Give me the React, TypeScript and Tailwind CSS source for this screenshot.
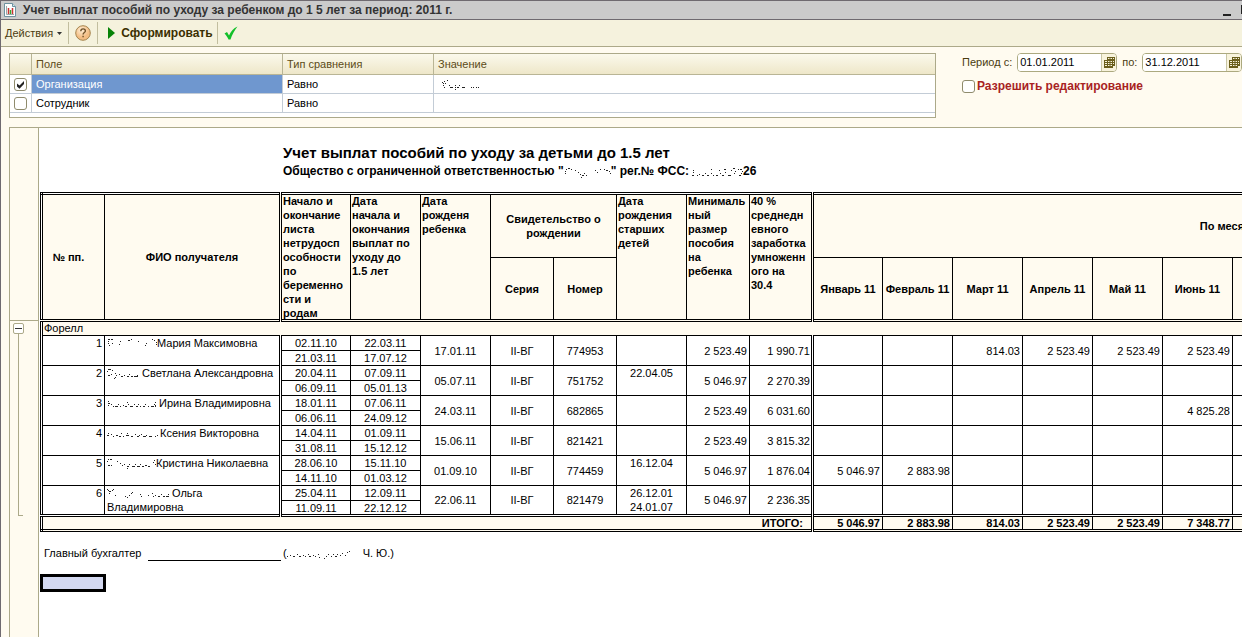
import { useState } from "react";
import clsx from "clsx";

const filters = [
  { field: "Организация", comparison: "Равно", checked: true },
  { field: "Сотрудник", comparison: "Равно", checked: false },
];

const months = [
  "Январь 11", "Февраль 11", "Март 11", "Апрель 11", "Май 11", "Июнь 11",
  "Июль 11", "Август 11", "Сентябрь 11", "Октябрь 11", "Ноябрь 11", "Декабрь 11",
];

const columnWidths = [
  "w-[63px]", "w-[176px]", "w-[70px]", "w-[70px]", "w-[70px]", "w-[63px]",
  "w-[63px]", "w-[70px]", "w-[63px]", "w-[63px]",
];

// Only fragments are left of the erased surnames
const rows = [
  {
    name: "Мария Максимовна",
    erased: { width: 50, d: "M1 1h2M4 1h2M1 3h1M1 5h1M2 7h1M5 5h1M13 3h1M12 6h1M21 2h2M24 1h1M31 3h1M39 5h1M38 7h1M45 1h1M47 2h1M49 4h1M49 6h1M50 8h1" },
    sick: ["02.11.10", "21.03.11"],
    care: ["22.03.11", "17.07.12"],
    birth: "17.01.11",
    number: "774953",
    older: "",
    min: "2 523.49",
    avg: "1 990.71",
    pay: { 2: "814.03", 3: "2 523.49", 4: "2 523.49", 5: "2 523.49" },
  },
  {
    name: "Светлана Александровна",
    erased: { width: 35, d: "M1 1h3M5 2h1M0 3h1M1 7h2M4 6h1M8 5h1M9 7h1M8 9h1M7 10h1M12 6h1M14 8h2M17 7h1M20 8h2M22 6h1M24 8h2M27 8h4M30 7h1" },
    sick: ["20.04.11", "06.09.11"],
    care: ["07.09.11", "05.01.13"],
    birth: "05.07.11",
    number: "751752",
    older: "22.04.05",
    min: "5 046.97",
    avg: "2 270.39",
    pay: {},
  },
  {
    name: "Ирина Владимировна",
    erased: { width: 52, d: "M1 3h1M1 5h2M1 7h1M4 6h1M6 8h1M8 8h3M11 6h1M13 8h1M16 7h1M18 8h2M21 6h1M20 4h1M23 8h3M27 6h1M29 8h2M31 6h1M33 8h1M36 8h2M38 6h1M41 8h1M44 8h3M47 6h1M48 4h1M48 7h1M48 8h1" },
    sick: ["18.01.11", "06.06.11"],
    care: ["07.06.11", "24.09.12"],
    birth: "24.03.11",
    number: "682865",
    older: "",
    min: "2 523.49",
    avg: "6 031.60",
    pay: { 5: "4 825.28" },
  },
  {
    name: "Ксения Викторовна",
    erased: { width: 53, d: "M1 5h1M0 7h2M4 6h1M6 8h1M9 7h2M12 8h2M14 5h1M16 8h1M19 7h3M20 5h1M24 8h2M28 6h1M30 8h2M32 7h1M34 6h1M36 8h3M39 7h1M42 8h3M48 8h1M50 7h1" },
    sick: ["14.04.11", "31.08.11"],
    care: ["01.09.11", "15.12.12"],
    birth: "15.06.11",
    number: "821421",
    older: "",
    min: "2 523.49",
    avg: "3 815.32",
    pay: {},
  },
  {
    name: "Кристина Николаевна",
    erased: { width: 49, d: "M1 1h1M3 1h2M0 3h1M1 7h2M4 7h1M10 3h1M13 5h1M15 7h1M17 6h1M20 8h2M20 10h1M22 6h1M25 8h3M28 6h1M30 8h3M33 6h1M35 8h2M38 7h2M41 8h2M47 2h1M46 4h1M48 6h1" },
    sick: ["28.06.10", "14.11.10"],
    care: ["15.11.10", "01.03.12"],
    birth: "01.09.10",
    number: "774459",
    older: "16.12.04",
    min: "5 046.97",
    avg: "1 876.04",
    pay: { 0: "5 046.97", 1: "2 883.98" },
  },
  {
    name: "Ольга\nВладимировна",
    erased: { width: 65, d: "M0 1h1M1 2h1M2 3h2M5 2h1M6 1h1M2 5h1M8 7h1M18 8h1M20 9h1M22 7h1M24 5h1M25 4h1M33 6h1M34 8h1M41 7h1M45 5h1M46 8h1M48 7h1M51 8h2M54 6h1M56 8h2M59 8h3M61 6h1" },
    sick: ["25.04.11", "11.09.11"],
    care: ["12.09.11", "22.12.12"],
    birth: "22.06.11",
    number: "821479",
    older: "26.12.01\n24.01.07",
    min: "5 046.97",
    avg: "2 236.35",
    pay: {},
  },
];

const totals = ["5 046.97", "2 883.98", "814.03", "2 523.49", "2 523.49", "7 348.77"];

function Erased({ width, d }: { width: number; d: string }) {
  return (
    <svg
      width={width}
      height="11"
      viewBox={`0 -0.5 ${width} 11`}
      className="inline-block align-text-bottom"
      stroke="#222"
      strokeWidth="1"
      shapeRendering="crispEdges"
      aria-hidden="true"
    >
      <path d={d} />
    </svg>
  );
}

function Checkbox({ id, label, initial = false }: { id: string; label?: string; initial?: boolean }) {
  const [checked, setChecked] = useState(initial);
  return (
    <span className="relative block h-[13px] w-[13px] shrink-0">
      <input
        id={id}
        type="checkbox"
        aria-label={label}
        checked={checked}
        onChange={() => setChecked(!checked)}
        className="block h-[13px] w-[13px] appearance-none rounded-[3px] border border-[#8f8b6c] bg-white"
      />
      {checked && (
        <svg viewBox="0 0 13 13" className="pointer-events-none absolute inset-0" aria-hidden="true">
          <path d="M3 5.5v3l2.500 2.200L10 6V3L5.500 7.500z" fill="#222" />
        </svg>
      )}
    </span>
  );
}

function DateField({ id, label, value }: { id: string; label: string; value: string }) {
  return (
    <>
      <label htmlFor={id} className="shrink-0">{label}</label>
      <span className="flex h-[19px] w-[100px] shrink-0 overflow-hidden rounded-[4px] border border-[#aca97f] bg-white">
        <input id={id} defaultValue={value} className="w-[83px] min-w-0 bg-white pl-0.5 text-[11px] text-black outline-none" />
        <button className="flex flex-1 items-center justify-center border-l border-[#c9c6a4] bg-[#f8f3dc]" aria-label="Выбрать дату">
          <svg width="11" height="12" viewBox="0 0 11 12" className="shrink-0" aria-hidden="true">
            <path d="M3 0h8v9h-2v2H0V3h3z" fill="#6b5f1c" />
            <path d="M4 1.500h1.500M6.500 1.500h1.500M9 1.500h1M1 4.500h2M4 4.500h1.500M6.500 4.500h1.500M9 4.500h1M1 6.500h2M4 6.500h1.500M6.500 6.500h1.500M9 6.500h1M1 8.500h2M4 8.500h1.500M6.500 8.500h1.500" stroke="#f8f3dc" />
          </svg>
        </button>
      </span>
    </>
  );
}

function Separator() {
  return <span className="h-[22px] w-px bg-[#c2be9f]" />;
}

function TitleBar() {
  return (
    <header className="flex h-5 items-center overflow-hidden border-y border-[#6f6a70] bg-[#cbcbcb] pl-[3px]">
      <svg width="12" height="14" viewBox="0 0 12 14" aria-hidden="true">
        <path d="M.5.5h8l3 3v10H.5z" fill="#fff" stroke="#6f93a0" />
        <path d="M8.500.5v3h3" fill="#d5e3e8" stroke="#6f93a0" />
        <path d="M2.500 3v8.500H10" fill="none" stroke="#9aa" />
        <path d="M4.500 5v6" stroke="#c33" strokeWidth="1.500" />
        <path d="M6.500 7v4" stroke="#3a3" strokeWidth="1.500" />
        <path d="M8.500 5v6" stroke="#c33" strokeWidth="1.500" />
      </svg>
      <h1 className="ml-[7px] whitespace-nowrap text-[12px] font-bold text-[#333]">
        Учет выплат пособий по уходу за ребенком до 1 5 лет за период: 2011 г.
      </h1>
      <div className="-mr-2 ml-auto flex gap-2.5">
        <button className="flex h-[11px] w-2 items-end" aria-label="Свернуть">
          <span className="h-0.5 w-2 bg-[#222]" />
        </button>
        <button className="h-[9px] w-[9px] border border-t-2 border-[#222]" aria-label="Развернуть" />
      </div>
    </header>
  );
}

function Toolbar() {
  return (
    <div className="flex h-[27px] items-center border-b border-[#aca989] bg-[#f5f2dd] pl-1 text-[#4a3c10]">
      <button className="flex items-center gap-1">
        Действия
        <svg width="5" height="3" viewBox="0 0 5 3" aria-hidden="true"><path d="M0 0h5L2.500 3z" fill="#333" /></svg>
      </button>
      <span className="ml-1.5 flex items-center gap-1.5">
        <Separator />
        <button aria-label="Справка">
          <svg width="16" height="16" viewBox="0 0 16 16" className="block" aria-hidden="true">
            <defs>
              <radialGradient id="help" cx="40%" cy="30%">
                <stop offset="0" stopColor="#fff0d8" />
                <stop offset="1" stopColor="#f3bd83" />
              </radialGradient>
            </defs>
            <circle cx="8" cy="8" r="7.300" fill="url(#help)" stroke="#a5844f" />
            <path d="M5.800 6.200c0-3.100 4.600-3.100 4.600-.3 0 1.600-2.300 1.700-2.300 3.600M8.100 10.800v1.500" fill="none" stroke="#70522a" strokeWidth="1.400" />
          </svg>
        </button>
        <Separator />
      </span>
      <button className="ml-2.5 flex items-center gap-1.5 text-[12px] font-bold text-[#3b2f00]">
        <svg width="7" height="12" viewBox="0 0 7 12" aria-hidden="true"><path d="M0 0l7 6-7 6z" fill="#078307" /></svg>
        Сформировать
      </button>
      <span className="ml-1 flex items-center gap-1.5">
        <Separator />
        <button aria-label="Применить">
          <svg width="14" height="14" viewBox="0 0 14 14" className="block" aria-hidden="true">
            <path d="M.5 7.500L3 6l2 3.500C7 5.500 9.500 2 13.500.5 10.500 4 8 9 6.500 13.500h-2C3.500 11 2 9 .5 7.500z" fill="#12c02a" />
          </svg>
        </button>
      </span>
    </div>
  );
}

function FilterTable() {
  const head = "h-[21px] border-b border-[#b9b595] bg-linear-to-b from-[#fbf9ec] to-[#eee7c9] pl-1 text-left font-normal";
  return (
    <div className="min-w-0 flex-1 border border-[#aca989] bg-white pb-1">
      <table className="w-full table-fixed border-separate border-spacing-0 leading-[14px]">
        <thead className="text-[#5c4b18]">
          <tr>
            <th className={clsx(head, "w-[22px] border-r")} aria-label="Использование" />
            <th className={clsx(head, "w-[251px] border-r")}>Поле</th>
            <th className={clsx(head, "w-[151px] border-r")}>Тип сравнения</th>
            <th className={head}>Значение</th>
          </tr>
        </thead>
        <tbody>
          {filters.map((filter) => (
            <tr key={filter.field} className="h-[19px] *:border-b *:border-[#c3ccd6]">
              <td className="border-r pl-1">
                <Checkbox id={filter.field} label={filter.field} initial={filter.checked} />
              </td>
              <td className={clsx("border-r pl-1", filter.checked && "bg-[#6f97cf] text-white")}>{filter.field}</td>
              <td className="border-r pl-1">{filter.comparison}</td>
              <td className="pl-2">
                {filter.checked && (
                  <Erased width={40} d="M0 3h1M2 2h1M1 4h1M3 4h1M1 6h1M2 8h1M5 1h1M7 6h1M8 8h3M13 6h1M13 8h1M13 10h1M15 8h2M17 6h1M20 8h3M29 8h1M31 8h1M34 8h1M36 8h1" />
                )}
              </td>
            </tr>
          ))}
        </tbody>
      </table>
    </div>
  );
}

function PeriodPanel() {
  return (
    <div className="flex w-[280px] shrink-0 flex-col gap-1.5 text-[#4a3c10]">
      <div className="flex items-center gap-[5px]">
        <DateField id="from" label="Период с:" value="01.01.2011" />
        <DateField id="to" label="по:" value="31.12.2011" />
      </div>
      <div className="flex items-center gap-0.5">
        <Checkbox id="edit" />
        <label htmlFor="edit" className="text-[12px] font-bold leading-4 text-[#a8231f]">Разрешить редактирование</label>
      </div>
    </div>
  );
}

const cell = "border border-black p-0";
const note = "border border-black p-0 pl-px text-left align-top";
const splitLeft = "border-l-3 [border-left-style:double]";
const splitRight = "border-r-3 [border-right-style:double]";

// Text may run under the lower rule without making the header taller
function NoteText({ children }: { children: string }) {
  return <div className="-mt-px h-[120px] whitespace-pre">{children}</div>;
}

function ReportTable() {
  return (
    <table className="ml-px w-[1614px] table-fixed border-collapse border-3 border-double border-black leading-[14px]">
      <colgroup>
        {columnWidths.map((width, index) => <col key={index} className={width} />)}
        {months.map((month) => <col key={month} className="w-[70px]" />)}
      </colgroup>
      <thead className="bg-[#fffbf0]">
        <tr className="h-16">
          <th rowSpan={2} className={clsx(cell, "pr-2.5")}>№ пп.</th>
          <th rowSpan={2} className={clsx(cell, splitRight)}>ФИО получателя</th>
          <th rowSpan={2} className={note}><NoteText>{"Начало и\nокончание\nлиста\nнетрудосп\nособности\nпо\nбеременно\nсти и\nродам"}</NoteText></th>
          <th rowSpan={2} className={note}><NoteText>{"Дата\nначала и\nокончания\nвыплат по\nуходу до\n1.5 лет"}</NoteText></th>
          <th rowSpan={2} className={note}><NoteText>{"Дата\nрожденя\nребенка"}</NoteText></th>
          <th colSpan={2} className={cell}>Свидетельство о рождении</th>
          <th rowSpan={2} className={note}><NoteText>{"Дата\nрождения\nстарших\nдетей"}</NoteText></th>
          <th rowSpan={2} className={note}><NoteText>{"Минималь\nный\nразмер\nпособия\nна\nребенка"}</NoteText></th>
          <th rowSpan={2} className={clsx(note, splitRight)}><NoteText>{"40 %\nсреднедн\nевного\nзаработка\nумноженн\nого на\n30.4"}</NoteText></th>
          <th colSpan={12} className={cell}>По месяцам</th>
        </tr>
        <tr className="h-[63px]">
          <th className={cell}>Серия</th>
          <th className={cell}>Номер</th>
          {months.map((month) => <th key={month} className={clsx(cell, "whitespace-nowrap")}>{month}</th>)}
        </tr>
      </thead>
      <tbody>
        <tr className="h-[15px] leading-[12px]">
          <td colSpan={22} className="border border-t-3 border-black bg-[#fffbf0] p-0 pl-px align-top [border-top-style:double]">
            Форелл
          </td>
        </tr>
      </tbody>
      {rows.map((row, index) => (
        <tbody key={row.number}>
          <tr className="h-[15px]">
            <td rowSpan={2} className={clsx(cell, "pr-0.5 text-right align-top")}>{index + 1}</td>
            <td rowSpan={2} className={clsx(cell, splitRight, "whitespace-pre pl-0.5 align-top")}>
              <Erased {...row.erased} />{row.name}
            </td>
            <td className={clsx(cell, "text-center leading-[12px]")}>{row.sick[0]}</td>
            <td className={clsx(cell, "text-center leading-[12px]")}>{row.care[0]}</td>
            <td rowSpan={2} className={clsx(cell, "text-center")}>{row.birth}</td>
            <td rowSpan={2} className={clsx(cell, "text-center")}>II-ВГ</td>
            <td rowSpan={2} className={clsx(cell, "text-center")}>{row.number}</td>
            <td rowSpan={2} className={clsx(cell, "whitespace-pre text-center align-top")}>{row.older}</td>
            <td rowSpan={2} className={clsx(cell, "pr-0.5 text-right")}>{row.min}</td>
            <td rowSpan={2} className={clsx(cell, splitRight, "pr-px text-right")}>{row.avg}</td>
            {months.map((month, i) => (
              <td key={month} rowSpan={2} className={clsx(cell, "pr-0.5 text-right")}>
                {(row.pay as Record<number, string>)[i]}
              </td>
            ))}
          </tr>
          <tr className="h-[15px]">
            <td className={clsx(cell, "text-center leading-[12px]")}>{row.sick[1]}</td>
            <td className={clsx(cell, "text-center leading-[12px]")}>{row.care[1]}</td>
          </tr>
        </tbody>
      ))}
      <tfoot className="bg-[#fffbf0] font-bold">
        <tr className="h-[15px] leading-[12px] *:border-t-3 *:[border-top-style:double]">
          <td colSpan={10} className={clsx(cell, "pr-2 text-right")}>ИТОГО:</td>
          {months.map((month, i) => (
            <td key={month} className={clsx(cell, i === 0 && splitLeft, "pr-0.5 text-right")}>{totals[i]}</td>
          ))}
        </tr>
      </tfoot>
    </table>
  );
}

function GroupGutter() {
  return (
    <div className="w-[29px] shrink-0 border-r border-[#aca989] bg-[#fffbf0] pt-48">
      <div className="border-t border-[#aca989] pl-[3px] pt-0.5">
        <button className="flex h-[11px] w-[11px] items-center justify-center rounded-[2px] border border-[#aca989] bg-white" aria-label="Свернуть группу">
          <span className="h-px w-[7px] bg-[#333]" />
        </button>
        <div className="ml-[5px] h-[182px] w-[5px] border-b border-l border-[#aca989]" />
      </div>
    </div>
  );
}

export default function App() {
  return (
    <div className="flex min-h-screen flex-col overflow-hidden border-l border-[#6f6a70] bg-[#fffbf0] font-['Liberation_Sans',Arial,sans-serif] text-[11px] text-black">
      <TitleBar />
      <Toolbar />
      <div className="flex gap-[26px] overflow-hidden pb-[9px] pl-2 pt-1.5">
        <FilterTable />
        <PeriodPanel />
      </div>
      <main className="ml-2 flex flex-1 border-l border-t border-[#aca989] bg-white">
        <GroupGutter />
        <div className="min-w-0 flex-1 overflow-hidden">
          <div className="mb-3 whitespace-nowrap pl-[244px] pt-4 font-bold leading-[18px]">
            <h2 className="text-[15px]">Учет выплат пособий по уходу за детьми до 1.5 лет</h2>
            <p className="text-[12px]">
              Общество с ограниченной ответственностью "
              <Erased width={47} d="M2 2h1M4 1h2M7 2h1M1 4h1M1 6h1M11 3h1M14 5h1M16 7h1M18 8h2M17 10h1M20 6h1M22 8h1M31 3h1M33 5h1M36 2h1M40 2h1M42 3h2M45 4h1M46 6h1" />
              " рег.№ ФСС:
              <Erased width={54} d="M4 3h1M4 5h1M3 8h2M8 8h1M10 7h1M13 8h2M16 6h1M18 8h2M22 2h1M22 6h1M24 8h1M27 8h2M30 3h1M31 6h1M33 8h2M35 2h2M36 5h1M39 8h3M42 3h1M44 1h2M46 4h1M45 6h1M49 2h1M51 2h2M53 4h1M52 6h1M50 8h2" />
              26
            </p>
          </div>
          <ReportTable />
          <div className="mt-3.5 flex whitespace-nowrap pl-[5px] leading-[14px]">
            <span className="w-[104px]">Главный бухгалтер</span>
            <span className="h-[15px] w-[133px] border-b border-black" />
            <span className="ml-0.5">
              (
              <Erased width={76} d="M0 8h1M3 7h1M6 8h2M10 6h1M12 8h2M16 7h1M18 8h1M21 6h1M22 8h2M26 7h1M28 8h1M31 6h1M32 9h1M37 10h1M39 8h1M41 6h1M44 8h1M46 6h1M48 8h2M50 6h1M53 7h1M55 5h1M58 7h1M60 4h1M62 3h1" />
              Ч. Ю.)
            </span>
          </div>
          <div className="ml-px mt-[13px] h-[18px] w-[66px] border-3 border-black bg-[#d3d8f0]" />
        </div>
      </main>
    </div>
  );
}
